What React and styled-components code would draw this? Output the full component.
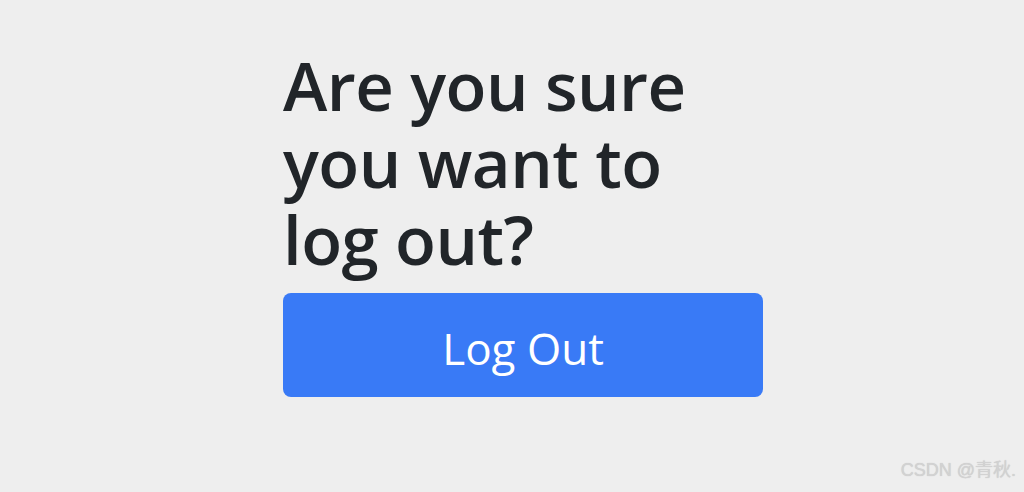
import React from 'react';
import styled, { createGlobalStyle } from 'styled-components'

const GlobalStyle = createGlobalStyle`
  html, body {
    margin: 0;
    padding: 0;
    background: #eeeeee;
  }
  body {
    font-family: "Open Sans", "Noto Sans", sans-serif;
  }
`

const Page = styled.div`
  position: relative;
  box-sizing: border-box;
  width: 1024px;
  height: 492px;
  padding-top: 47px;
  padding-left: 283px;
  overflow: hidden;
`

const Panel = styled.div`
  display: flex;
  flex-direction: column;
  width: 480px;
`

const Title = styled.h1`
  margin: 0;
  width: 420px;
  font-size: 67px;
  font-weight: 600;
  line-height: 77px;
  color: #212529;
  letter-spacing: -0.5px;
`

const LogOutButton = styled.button`
  margin-top: 15px;
  height: 104px;
  width: 480px;
  padding-top: 6px;
  border: none;
  border-radius: 8px;
  background: #397af6;
  color: #ffffff;
  font-family: "Open Sans", "Noto Sans", sans-serif;
  font-size: 44px;
  font-weight: 400;
  cursor: pointer;
`

const Watermark = styled.div`
  position: absolute;
  right: 8px;
  bottom: 11px;
  font-family: "Liberation Sans", "Noto Sans CJK SC", sans-serif;
  font-size: 18px;
  color: #d2d2d2;
  text-shadow: 0 0 1px #c4c4c4;
`

class App extends React.Component {
  render() {
    return (
      <>
        <GlobalStyle />
        <Page>
          <Panel>
            <Title>Are you sure you want to log out?</Title>
            <LogOutButton>Log Out</LogOutButton>
          </Panel>
          <Watermark>CSDN @青秋.</Watermark>
        </Page>
      </>
    );
  }
}

export default App;
